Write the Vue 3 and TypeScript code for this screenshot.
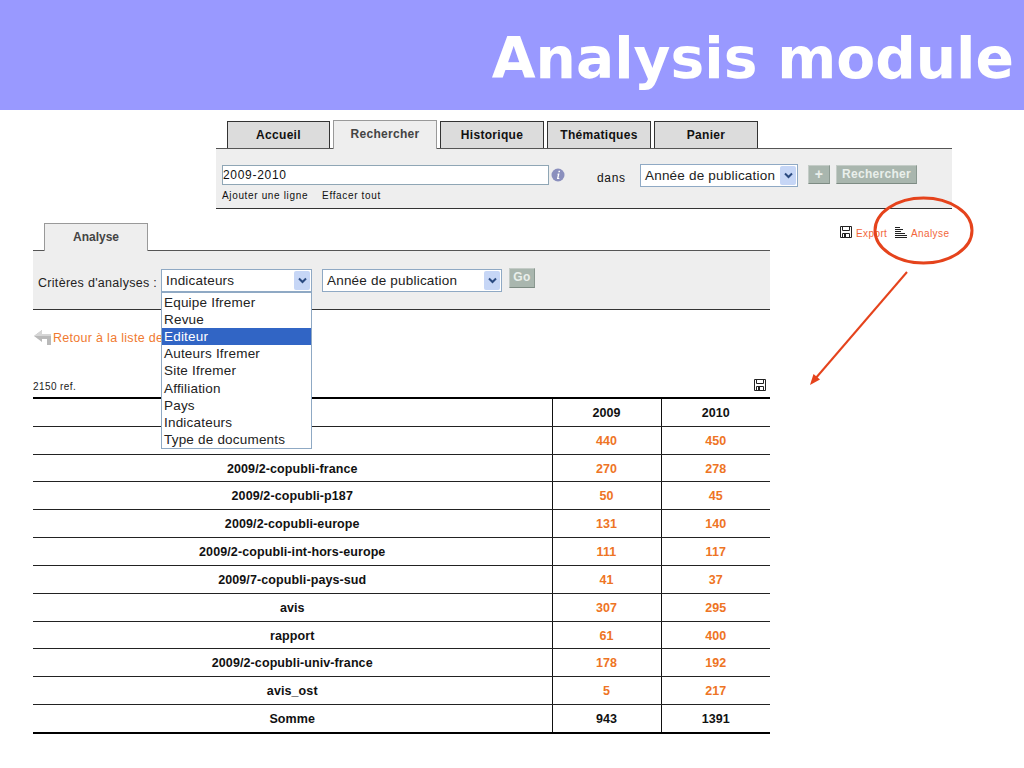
<script setup lang="ts">
const navTabs = ['Accueil', 'Rechercher', 'Historique', 'Thématiques', 'Panier']
const options = ['Equipe Ifremer', 'Revue', 'Editeur', 'Auteurs Ifremer', 'Site Ifremer', 'Affiliation', 'Pays', 'Indicateurs', 'Type de documents']
const rows: [string, number, number][] = [
  ['', 440, 450],
  ['2009/2-copubli-france', 270, 278],
  ['2009/2-copubli-p187', 50, 45],
  ['2009/2-copubli-europe', 131, 140],
  ['2009/2-copubli-int-hors-europe', 111, 117],
  ['2009/7-copubli-pays-sud', 41, 37],
  ['avis', 307, 295],
  ['rapport', 61, 400],
  ['2009/2-copubli-univ-france', 178, 192],
  ['avis_ost', 5, 217],
]
</script>

<template>
  <div class="page">
    <header class="banner"><h1>Analysis module</h1></header>

    <section class="search">
      <nav class="nav-tabs">
        <div v-for="t in navTabs" :key="t" class="nav-tab" :class="{ active: t === 'Rechercher' }">{{ t }}</div>
      </nav>
      <div class="search-panel">
        <div class="search-left">
          <div class="query-row">
            <div class="text-input">2009-2010</div>
            <svg class="info" width="14" height="14" viewBox="0 0 14 14">
              <circle cx="7" cy="7" r="6.5" fill="#8a8fbd" />
              <path d="M7.6 2.800h1.500l-.3 1.500H7.300zM6.900 5.400h1.600L7.500 10h1l-.3 1H5.900l1-4.600h-.8z" fill="#fff" />
            </svg>
          </div>
          <div class="query-links"><span>Ajouter une ligne</span><span>Effacer tout</span></div>
        </div>
        <span class="dans">dans</span>
        <div class="select select-search">
          <span>Année de publication</span>
          <i class="chev"><svg width="9" height="7" viewBox="0 0 9 7"><path d="M1 1.500l3.500 3.500L8 1.500" fill="none" stroke="#2a4a80" stroke-width="2" /></svg></i>
        </div>
        <div class="btn btn-plus">+</div>
        <div class="btn btn-search">Rechercher</div>
      </div>
    </section>

    <div class="work">
      <section class="analysis">
        <div class="analysis-tabs"><div class="analysis-tab">Analyse</div></div>
        <div class="criteria">
          <label>Critères d'analyses :</label>
          <div class="select select-a">
            <span>Indicateurs</span>
            <i class="chev"><svg width="9" height="7" viewBox="0 0 9 7"><path d="M1 1.500l3.500 3.500L8 1.500" fill="none" stroke="#2a4a80" stroke-width="2" /></svg></i>
            <ul class="dropdown">
              <li v-for="o in options" :key="o" :class="{ hl: o === 'Editeur' }">{{ o }}</li>
            </ul>
          </div>
          <div class="select select-b">
            <span>Année de publication</span>
            <i class="chev"><svg width="9" height="7" viewBox="0 0 9 7"><path d="M1 1.500l3.500 3.500L8 1.500" fill="none" stroke="#2a4a80" stroke-width="2" /></svg></i>
          </div>
          <div class="btn btn-go">Go</div>
        </div>

        <div class="back">
          <svg width="18" height="17" viewBox="0 0 18 17">
            <path d="M9 1L1 7l8 6v-3h5v6h4V5H9z" fill="#b9b9b9" />
            <path d="M9 1L1 7h17V5H9z" fill="#d6d6d6" />
          </svg>
          <span>Retour à la liste de</span>
        </div>

        <div class="count-row">
          <span class="count">2150 ref.</span>
          <svg class="floppy" width="12" height="12" viewBox="0 0 12 12">
            <path d="M.5.5h11v11H.5z" fill="#fff" stroke="#222" />
            <path d="M2.500.5v4h7v-4M2.500 11.500v-4h7v4" fill="none" stroke="#222" />
            <path d="M4 8h2v3H4z" fill="#222" />
          </svg>
        </div>

        <table class="data">
          <colgroup><col class="c1" /><col class="c2" /><col class="c2" /></colgroup>
          <thead>
            <tr><th></th><th>2009</th><th>2010</th></tr>
          </thead>
          <tbody>
            <tr v-for="r in rows" :key="r[1]">
              <td class="name">{{ r[0] }}</td>
              <td class="num">{{ r[1] }}</td>
              <td class="num">{{ r[2] }}</td>
            </tr>
          </tbody>
          <tfoot>
            <tr><td>Somme</td><td>943</td><td>1391</td></tr>
          </tfoot>
        </table>
      </section>

      <aside class="tools">
        <svg width="12" height="12" viewBox="0 0 12 12">
          <path d="M.5.5h11v11H.5z" fill="#fff" stroke="#222" />
          <path d="M2.500.5v4h7v-4M2.500 11.500v-4h7v4" fill="none" stroke="#222" />
          <path d="M4 8h2v3H4z" fill="#222" />
        </svg>
        <span class="tool-link export">Export</span>
        <svg width="12" height="11" viewBox="0 0 12 11">
          <path d="M0 .5h5M0 2.500h8M0 4.500h6M0 6.500h10M0 8.500h12M0 10.500h12" stroke="#222" fill="none" />
        </svg>
        <span class="tool-link">Analyse</span>
      </aside>
    </div>

    <svg class="annot" width="1024" height="768" viewBox="0 0 1024 768">
      <ellipse cx="923.500" cy="230.500" rx="48.500" ry="32.500" fill="none" stroke="#e5431c" stroke-width="3" />
      <path d="M907 272L815 379" stroke="#e5431c" stroke-width="2" fill="none" />
      <path d="M810 385l3.500-11 6.500 5.500z" fill="#e5431c" />
    </svg>
  </div>
</template>

<style scoped>
.page {
  position: relative;
  width: 1024px;
  height: 768px;
  overflow: hidden;
  background: #fff;
  font-family: "Liberation Sans", Arial, sans-serif;
  color: #111;
}
.banner {
  height: 110px;
  background: #9999ff;
  display: flex;
  justify-content: flex-end;
  align-items: center;
  padding-right: 10px;
  box-sizing: border-box;
}
.banner h1 {
  margin: 5px 0 0;
  font: bold 56.700px/64px "DejaVu Sans", Verdana, sans-serif;
  color: #fff;
}

/* Search block */
.search {
  width: 736px;
  margin: 10px 0 0 216px;
}
.nav-tabs {
  display: flex;
  gap: 3px;
  height: 28px;
  padding-left: 11px;
  align-items: flex-end;
}
.nav-tab {
  width: 104px;
  height: 27px;
  box-sizing: border-box;
  background: #dcdcdc;
  border: 1px solid #333;
  border-bottom: 0;
  font: bold 12px/27px "Liberation Sans", Arial, sans-serif;
  letter-spacing: 0.3px;
  text-align: center;
  color: #111;
}
.nav-tab:first-child {
  width: 103px;
}
.nav-tab.active {
  height: 29px;
  margin-bottom: -1px;
  background: #eee;
  border-color: #999;
  color: #444;
  line-height: 26px;
  position: relative;
}
.search-panel {
  height: 61px;
  box-sizing: border-box;
  background: #eee;
  border-top: 1px solid #555;
  border-bottom: 1px solid #333;
  display: flex;
  align-items: flex-start;
  padding: 15px 0 0 6px;
}
.search-left {
  width: 343px;
}
.query-row {
  display: flex;
  align-items: center;
  gap: 2px;
  margin-top: 1px;
}
.text-input {
  width: 327px;
  height: 20px;
  box-sizing: border-box;
  background: #fff;
  border: 1px solid #8fa6b5;
  font-size: 12px;
  line-height: 18px;
  letter-spacing: 0.7px;
  padding-left: 0;
}
.query-links {
  display: flex;
  gap: 14px;
  margin-top: 4px;
  font-size: 10px;
  line-height: 14px;
  letter-spacing: 0.65px;
}
.dans {
  margin: 7px 0 0 32px;
  width: 43px;
  font-size: 12px;
  line-height: 14px;
  letter-spacing: 0.7px;
}
.select {
  position: relative;
  height: 23px;
  box-sizing: border-box;
  background: #fff;
  border: 1px solid #8fa9c4;
  font-size: 13.500px;
  letter-spacing: 0.2px;
  line-height: 22px;
  padding-left: 4px;
  color: #222;
}
.select-search {
  width: 158px;
}
.chev {
  position: absolute;
  top: 1px;
  right: 1px;
  width: 16px;
  height: 19px;
  border-radius: 2px;
  background: #c6d6f6;
  display: flex;
  align-items: center;
  justify-content: center;
}
.btn {
  box-sizing: border-box;
  background: #a9b6ae;
  color: #e9efeb;
  font-weight: bold;
  font-size: 12px;
  letter-spacing: 0.3px;
  text-align: center;
  border: 1px solid;
  border-color: #c4ccc7 #8a9890 #7d8b83 #c4ccc7;
}
.btn-plus {
  width: 22px;
  height: 19px;
  line-height: 16px;
  font-size: 14px;
  margin: 1px 0 0 10px;
}
.btn-search {
  width: 81px;
  height: 19px;
  line-height: 16px;
  margin: 1px 0 0 6px;
}

/* Analysis block */
.work {
  display: flex;
  margin: 14px 0 0 33px;
}
.analysis {
  width: 737px;
}
.analysis-tabs {
  height: 27px;
  padding-left: 11px;
}
.analysis-tab {
  width: 104px;
  height: 28px;
  box-sizing: border-box;
  background: #eee;
  border: 1px solid #999;
  border-bottom: 0;
  font: bold 12px/27px "Liberation Sans", Arial, sans-serif;
  color: #444;
  text-align: center;
  position: relative;
}
.criteria {
  height: 60px;
  box-sizing: border-box;
  background: #eee;
  border-top: 1px solid #555;
  border-bottom: 1px solid #333;
  display: flex;
  align-items: flex-start;
  padding: 18px 0 0 5px;
}
.criteria label {
  width: 123px;
  font-size: 12.500px;
  line-height: 14px;
  letter-spacing: 0.3px;
  margin-top: 7px;
  color: #222;
  white-space: nowrap;
}
.select-a {
  width: 151px;
}
.select-b {
  width: 180px;
  margin-left: 10px;
}
.dropdown {
  position: absolute;
  z-index: 2;
  top: 22px;
  left: -1px;
  width: 151px;
  box-sizing: border-box;
  margin: 0;
  padding: 1px 0 0;
  list-style: none;
  background: #fff;
  border: 1px solid #8fa9c4;
  height: 157px;
}
.dropdown li {
  height: 17.120px;
  line-height: 17px;
  padding-left: 2px;
  color: #222;
  white-space: nowrap;
}
.dropdown li.hl {
  background: #3165c5;
  color: #fff;
}
.btn-go {
  width: 26px;
  height: 20px;
  line-height: 17px;
  margin: -1px 0 0 7px;
}
.back {
  display: flex;
  align-items: center;
  gap: 2px;
  height: 17px;
  margin-top: 19px;
  color: #f07a30;
  font-size: 12.500px;
  letter-spacing: 0.3px;
}
.count-row {
  display: flex;
  justify-content: space-between;
  align-items: center;
  height: 14px;
  margin-top: 32px;
  padding-right: 4px;
  color: #222;
}
.count {
  font-size: 10px;
  letter-spacing: 0.4px;
  margin-top: 3px;
}
.data {
  width: 737px;
  margin-top: 5px;
  table-layout: fixed;
  border-collapse: collapse;
  font-size: 12.500px;
  letter-spacing: 0.1px;
  font-weight: bold;
  text-align: center;
  border-top: 2px solid #000;
  border-bottom: 2px solid #000;
}
.c1 { width: 519px; }
.c2 { width: 109px; }
.data th,
.data td {
  height: 25.830px;
  padding: 1px 0 0;
  border-bottom: 1px solid #222;
}
.data th + th,
.data td + td {
  border-left: 1px solid #111;
}
.data .name,
.data th,
.data tfoot td {
  color: #111;
}
.data .num {
  color: #ee7424;
}
.tools {
  display: flex;
  align-items: center;
  height: 12px;
  margin: 3px 0 0 70px;
  white-space: nowrap;
}
.tool-link {
  font-size: 10px;
  letter-spacing: 0.4px;
  color: #f2663a;
  margin: 2px 0 0 4px;
}
.export {
  width: 39px;
}
.annot {
  position: absolute;
  top: 0;
  left: 0;
  pointer-events: none;
}
</style>
